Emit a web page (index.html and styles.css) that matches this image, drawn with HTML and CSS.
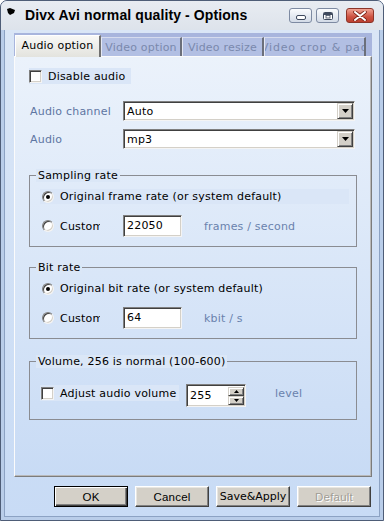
FILE: index.html
```html
<!DOCTYPE html>
<html lang="en">
<head>
<meta charset="utf-8">
<title>Divx Avi normal quality - Options</title>
<link rel="stylesheet" href="styles.css">
</head>
<body>
<div class="window">
  <div class="titlebar">
    <svg class="appicon" viewBox="0 0 8 7" width="8" height="7"><path d="M0 1 L3 0 L8 2 L7 5 L3 7 L1 5 Z" fill="#000"/></svg>
    <span class="title">Divx Avi normal quality - Options</span>
    <div class="tb-buttons">
      <span class="tb-btn"><svg viewBox="0 0 10 5" width="10" height="5"><rect x="0.5" y="0.5" width="9" height="4" rx="1.5" fill="#fff" stroke="#3f4a5e"/></svg></span>
      <span class="tb-btn"><svg viewBox="0 0 10 8" width="10" height="8"><rect x="0.5" y="0.5" width="9" height="7" rx="1" fill="#fff" stroke="#3f4a5e"/><rect x="1" y="1" width="8" height="2" fill="#3f4a5e"/><rect x="3" y="3.5" width="4" height="2.5" fill="#fff" stroke="#3f4a5e" stroke-width="0.8"/></svg></span>
      <span class="tb-btn close"><svg viewBox="0 0 14 10" width="14" height="10"><path d="M2 1 L12 9 M12 1 L2 9" stroke="#7a2418" stroke-width="3.6" stroke-linecap="round"/><path d="M2 1 L12 9 M12 1 L2 9" stroke="#fff" stroke-width="2" stroke-linecap="round"/></svg></span>
    </div>
  </div>
  <div class="frame">
    <div class="client">
      <div class="tabs">
        <div class="tab active">Audio option</div>
        <div class="tab t2">Video option</div>
        <div class="tab t3">Video resize</div>
        <div class="tab t4"><span class="tab-text">Video crop &amp; pad</span></div>
      </div>
      <div class="panel">
        <div class="check-ctl disable"><span class="checkbox"></span><span>Disable audio</span></div>

        <div class="fields">
          <span class="field-label">Audio channel</span>
          <div class="combo"><span class="combo-value">Auto</span><span class="combo-btn"><svg viewBox="0 0 7 4" width="7" height="4"><path d="M0 0 H7 L3.5 4 Z" fill="#000"/></svg></span></div>
          <span class="field-label">Audio</span>
          <div class="combo"><span class="combo-value">mp3</span><span class="combo-btn"><svg viewBox="0 0 7 4" width="7" height="4"><path d="M0 0 H7 L3.5 4 Z" fill="#000"/></svg></span></div>
        </div>

        <fieldset class="group sampling">
          <legend>Sampling rate</legend>
          <div class="radio-ctl wide"><span class="radio checked"></span><span>Original frame rate (or system default)</span></div>
          <div class="custom-row">
            <div class="radio-ctl narrow"><span class="radio"></span><span>Custom</span></div>
            <div class="textbox">22050</div>
            <span class="unit">frames / second</span>
          </div>
        </fieldset>

        <fieldset class="group bitrate">
          <legend>Bit rate</legend>
          <div class="radio-ctl plain"><span class="radio checked"></span><span>Original bit rate (or system default)</span></div>
          <div class="custom-row">
            <div class="radio-ctl narrow"><span class="radio"></span><span>Custom</span></div>
            <div class="textbox">64</div>
            <span class="unit">kbit / s</span>
          </div>
        </fieldset>

        <fieldset class="group volume">
          <legend>Volume, 256 is normal (100-600)</legend>
          <div class="volume-row">
            <div class="check-ctl adjust"><span class="checkbox"></span><span>Adjust audio volume</span></div>
            <div class="spinbox">
              <span class="spin-value">255</span>
              <span class="spin-btns">
                <span class="spin-btn"><svg viewBox="0 0 5 3" width="5" height="3"><path d="M0 3 H5 L2.5 0 Z" fill="#000"/></svg></span>
                <span class="spin-btn"><svg viewBox="0 0 5 3" width="5" height="3"><path d="M0 0 H5 L2.5 3 Z" fill="#000"/></svg></span>
              </span>
            </div>
            <span class="unit level">level</span>
          </div>
        </fieldset>
      </div>
      <div class="buttons">
        <button class="btn btn-default">OK</button>
        <button class="btn">Cancel</button>
        <button class="btn btn-wide">Save&amp;Apply</button>
        <button class="btn btn-disabled" disabled>Default</button>
      </div>
    </div>
  </div>
</div>
</body>
</html>
```

FILE: styles.css
```css
* { box-sizing: border-box; }
html, body { margin: 0; padding: 0; }
body {
  width: 384px;
  height: 521px;
  overflow: hidden;
  background: #ffffff;
  font-family: "DejaVu Sans", Verdana, sans-serif;
  font-size: 11px;
  line-height: 13px;
  letter-spacing: 0.2px;
  color: #000;
}

.window {
  width: 384px;
  height: 521px;
  border: 1px solid #4e5d77;
  border-radius: 7px 7px 0 0;
  background: #b9cde9;
  display: flex;
  flex-direction: column;
  overflow: hidden;
}

/* ---------- title bar ---------- */
.titlebar {
  height: 29px;
  flex: none;
  display: flex;
  align-items: flex-start;
  padding: 0 9px 0 6px;
  background: linear-gradient(#e8ecf2, #dde3eb);
}
.appicon { margin-top: 7px; margin-right: 10px; }
.title {
  flex: 1;
  margin-top: 6px;
  font-family: "Liberation Sans", Arial, sans-serif;
  font-weight: bold;
  font-size: 14px;
  line-height: 16px;
  letter-spacing: 0.1px;
  color: #000;
  white-space: nowrap;
}
.tb-buttons { display: flex; gap: 4px; margin-top: 7px; }
.tb-btn {
  width: 23px;
  height: 15px;
  border: 1px solid #7d8aa2;
  border-radius: 3px;
  background: linear-gradient(#fbfcfe, #d3dbe7);
  display: flex;
  align-items: center;
  justify-content: center;
}
.tb-btn:first-child svg { margin-top: 4px; }
.tb-btn.close {
  width: 28px;
  margin-left: 3px;
  border-color: #8b3428;
  background: linear-gradient(#f0a393, #cd5241 60%, #bd3f2f);
}

/* ---------- frame & client ---------- */
.frame {
  flex: 1;
  display: flex;
  padding: 0 3px 3px;
}
.client {
  flex: 1;
  border: 1px solid #8ca2c3;
  border-top: none;
  background: linear-gradient(#dae6f6, #c8dbf5);
  padding: 3px 7px 9px 9px;
  display: flex;
  flex-direction: column;
}

/* ---------- tabs ---------- */
.tabs {
  height: 23px;
  flex: none;
  display: flex;
  align-items: flex-end;
  padding-left: 1px;
  background: #a8b5dd;
}
.tab {
  height: 19px;
  flex: none;
  display: flex;
  align-items: center;
  justify-content: center;
  white-space: nowrap;
  overflow: hidden;
  color: #7a89ad;
  background: #b2bfe3;
  border-top: 1px solid #d6dcee;
  border-left: 1px solid #e4e8f4;
  border-right: 2px solid #6b6f7a;
}
.tab.active {
  width: 86px;
  height: 22px;
  margin-bottom: -1px;
  color: #000;
  background: linear-gradient(#f8f8f6, #e3e3de);
  border-top: 1px solid #ffffff;
  border-left: 1px solid #ffffff;
  border-right: 2px solid #707070;
  position: relative;
  z-index: 1;
  padding-bottom: 2px;
}
.t2 { width: 81px; }
.t3 { width: 82px; }
.t4 { width: 102px; justify-content: flex-start; }
.t4 .tab-text { margin-left: -4px; letter-spacing: 0.8px; }

/* ---------- panel ---------- */
.panel {
  height: 421px;
  flex: none;
  border: 1px solid;
  border-color: #fbfbfb #7c7c7c #7c7c7c #fbfbfb;
  box-shadow: inset -1px -1px 0 #b9b9b9;
  background: linear-gradient(#ebf2fb, #c8dbf5);
  padding: 11px 14px 0 14px;
}

.check-ctl {
  display: flex;
  align-items: center;
  gap: 6px;
  height: 16px;
  background: #dae6f7;
  white-space: nowrap;
}
.disable { width: 102px; }
.checkbox {
  width: 13px;
  height: 13px;
  flex: none;
  background: #fff;
  border: 1px solid;
  border-color: #7f7f7f #f4f4f4 #f4f4f4 #7f7f7f;
  box-shadow: inset 1px 1px 0 #404040, inset -1px -1px 0 #d4d0c8;
}

.fields {
  margin-top: 17px;
  display: grid;
  grid-template-columns: 94px 232px;
  row-gap: 8px;
  align-items: center;
}
.field-label { color: #5e75a2; padding-left: 1px; }
.combo {
  height: 20px;
  display: flex;
  align-items: center;
  justify-content: space-between;
  padding: 0 1px 0 3px;
  background: #fff;
  border: 1px solid;
  border-color: #7f7f7f #f4f4f4 #f4f4f4 #7f7f7f;
  box-shadow: inset 1px 1px 0 #404040, inset -1px -1px 0 #d4d0c8;
}
.combo-btn {
  width: 16px;
  height: 16px;
  display: flex;
  align-items: center;
  justify-content: center;
  background: #d4d0c8;
  border: 1px solid;
  border-color: #d4d0c8 #404040 #404040 #d4d0c8;
  box-shadow: inset 1px 1px 0 #fff, inset -1px -1px 0 #808080;
}

/* ---------- group boxes ---------- */
.group {
  margin: 20px 0 0;
  padding: 0 0 9px 0;
  border: 1px solid #8a8c92;
  min-width: 0;
}
.group legend {
  margin-left: 6px;
  padding: 0 2px;
  line-height: 13px;
  background: #dbe7f7;
}
.bitrate { margin-top: 14px; }
.volume { margin-top: 16px; padding-bottom: 12px; }

.radio-ctl {
  margin-left: 10px;
  height: 15px;
  display: flex;
  align-items: center;
  gap: 6px;
  padding-left: 2px;
  white-space: nowrap;
  overflow: hidden;
}
.radio-ctl.wide, .radio-ctl.plain { margin-top: 7px; width: 309px; }
.radio-ctl.wide { background: #dae6f7; }
.radio-ctl.narrow { width: 60px; height: 17px; margin-left: 10px; }
.radio {
  width: 12px;
  height: 12px;
  flex: none;
  border-radius: 50%;
  background: #fff;
  border: 1px solid;
  border-color: #808080 #f2f2f2 #f2f2f2 #808080;
  box-shadow: inset 1px 1px 0 #404040, inset -1px -1px 0 #d4d0c8;
  display: flex;
  align-items: center;
  justify-content: center;
}
.radio.checked::after {
  content: "";
  width: 4px;
  height: 4px;
  border-radius: 50%;
  background: #000;
}

.custom-row {
  margin-top: 11px;
  height: 22px;
  display: flex;
  align-items: center;
}
.textbox {
  margin-left: 23px;
  width: 59px;
  height: 22px;
  padding: 3px 0 0 3px;
  background: #fff;
  border: 1px solid;
  border-color: #7f7f7f #f4f4f4 #f4f4f4 #7f7f7f;
  box-shadow: inset 1px 1px 0 #404040, inset -1px -1px 0 #d4d0c8;
}
.unit { margin-left: 22px; color: #6a82ad; }

.volume-row {
  margin-top: 16px;
  height: 23px;
  display: flex;
  align-items: flex-start;
}
.adjust { margin-left: 10px; margin-top: 1px; width: 139px; padding-left: 1px; }
.spinbox {
  margin-left: 7px;
  width: 60px;
  height: 23px;
  display: flex;
  justify-content: space-between;
  padding: 2px 1px 1px 3px;
  background: #fff;
  border: 1px solid;
  border-color: #7f7f7f #f4f4f4 #f4f4f4 #7f7f7f;
  box-shadow: inset 1px 1px 0 #404040, inset -1px -1px 0 #d4d0c8;
}
.spin-value { padding-top: 2px; }
.spin-btns { display: flex; flex-direction: column; width: 16px; }
.spin-btn {
  flex: 1;
  display: flex;
  align-items: center;
  justify-content: center;
  background: #d4d0c8;
  border: 1px solid;
  border-color: #d4d0c8 #404040 #404040 #d4d0c8;
  box-shadow: inset 1px 1px 0 #fff, inset -1px -1px 0 #808080;
}
.level { margin-left: 29px; margin-top: 3px; }

/* ---------- buttons ---------- */
.buttons {
  margin-top: 9px;
  height: 21px;
  flex: none;
  display: flex;
  justify-content: flex-end;
  gap: 7px;
  padding-right: 1px;
}
.btn {
  width: 74px;
  height: 21px;
  margin: 0;
  padding: 0;
  font-family: "Liberation Sans", Arial, sans-serif;
  font-size: 11.5px;
  letter-spacing: 0.2px;
  color: #000;
  background: #d4d0c8;
  border: 1px solid;
  border-color: #ffffff #404040 #404040 #ffffff;
  box-shadow: inset -1px -1px 0 #808080, inset 1px 1px 0 #e8e6e1;
}
.btn-default {
  border-color: #000;
  box-shadow: inset 1px 1px 0 #fff, inset -1px -1px 0 #404040, inset -2px -2px 0 #808080;
}
.btn-wide { font-family: "DejaVu Sans", Verdana, sans-serif; font-size: 11px; letter-spacing: 0; }
.btn-disabled { color: #a19d96; text-shadow: 1px 1px 0 #fff; }
```
